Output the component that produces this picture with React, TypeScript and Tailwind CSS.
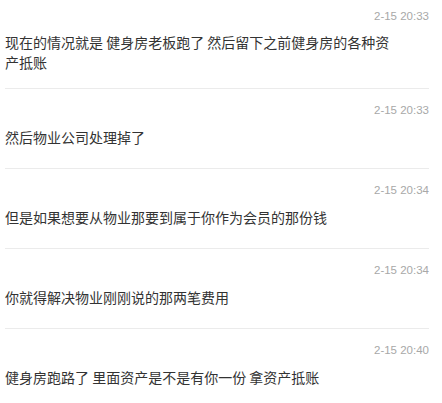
import React from "react";

const items = [
  { time: "2-15 20:33", text: "现在的情况就是 健身房老板跑了 然后留下之前健身房的各种资产抵账", first: true },
  { time: "2-15 20:33", text: "然后物业公司处理掉了" },
  { time: "2-15 20:34", text: "但是如果想要从物业那要到属于你作为会员的那份钱" },
  { time: "2-15 20:34", text: "你就得解决物业刚刚说的那两笔费用" },
  { time: "2-15 20:40", text: "健身房跑路了 里面资产是不是有你一份 拿资产抵账", last: true },
];

export default function App() {
  return (
    <div
      className="w-[442px] h-[403px] overflow-hidden bg-white pl-[5px] pr-[13px]"
      style={{ fontFamily: '"Microsoft YaHei", "Noto Sans CJK SC", "Liberation Sans", sans-serif' }}
    >
      {items.map((it, i) => (
        <div
          key={i}
          className={
            (it.first ? "pt-[8px] pb-[16px] " : "pt-[13px] pb-[21px] ") +
            (it.last ? "" : "border-b border-[#ebebeb]")
          }
        >
          <div
            className="flex justify-end text-[11.5px] leading-[16px] text-[#a8a8a8]"
            style={{ fontFamily: '"Liberation Sans", Arial, sans-serif' }}
          >
            {it.time}
          </div>
          <div className={(it.first ? "mt-[8px] " : "mt-[9px] ") + "max-w-[392px] text-[14px] leading-[20px] text-[#333333]"}>
            {it.text}
          </div>
        </div>
      ))}
    </div>
  );
}
